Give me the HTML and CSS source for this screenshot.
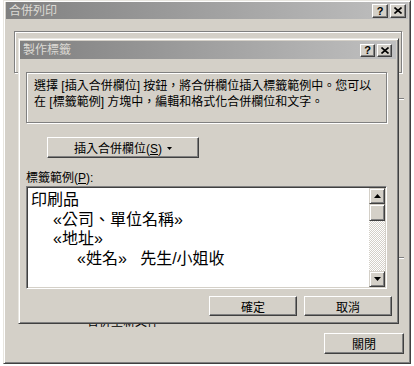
FILE: index.html
```html
<!DOCTYPE html>
<html lang="zh-Hant">
<head>
    <meta charset="UTF-8">
    <meta name="viewport" content="width=device-width, initial-scale=1.0">
    <title>合併列印</title>
    <link rel="stylesheet" href="styles.css">
</head>
<body>
    <div class="window">
        <!-- Outer window: merge print -->
        <div class="titlebar">
            <span class="title-text">合併列印</span>
            <div class="title-buttons">
                <span class="title-btn help">?</span>
                <span class="title-btn close">
                    <svg width="8" height="7" viewBox="0 0 8 7"><path d="M0.5 0.5 L7.5 6.5 M7.5 0.5 L0.5 6.5" stroke="#000" stroke-width="1.6"/></svg>
                </span>
            </div>
        </div>

        <div class="group-box"></div>
        <div class="edge-tick tick-one"></div>
        <div class="edge-tick tick-two"></div>
        <div class="merge-text">合併至新文件</div>
        <div class="close-row">
            <button class="btn btn-close">關閉</button>
        </div>

        <!-- Inner dialog: create labels -->
        <div class="dialog">
            <div class="titlebar small">
                <span class="title-text">製作標籤</span>
                <div class="title-buttons">
                    <span class="title-btn help">?</span>
                    <span class="title-btn close">
                        <svg width="8" height="7" viewBox="0 0 8 7"><path d="M0.5 0.5 L7.5 6.5 M7.5 0.5 L0.5 6.5" stroke="#000" stroke-width="1.6"/></svg>
                    </span>
                </div>
            </div>

            <div class="info-box">
                <p>選擇 [插入合併欄位] 按鈕，將合併欄位插入標籤範例中。您可以</p>
                <p>在 [標籤範例] 方塊中，編輯和格式化合併欄位和文字。</p>
            </div>

            <button class="btn btn-insert"><span>插入合併欄位(<u>S</u>)</span><svg class="drop-arrow" width="5" height="3" viewBox="0 0 5 3"><path d="M0 0 H5 L2.5 3 Z" fill="#000"/></svg></button>

            <div class="field-label">標籤範例(<u>P</u>):</div>
            <div class="sample-box">
                <div class="sample-text">
                    <div class="line">印刷品</div>
                    <div class="line indent-1">«公司、單位名稱»</div>
                    <div class="line indent-1">«地址»</div>
                    <div class="line indent-2">«姓名»&nbsp;&nbsp; 先生/小姐收</div>
                </div>
                <div class="scrollbar">
                    <div class="scroll-btn">
                        <svg width="7" height="4" viewBox="0 0 7 4"><path d="M3.5 0 L7 4 H0 Z" fill="#000"/></svg>
                    </div>
                    <div class="scroll-thumb"></div>
                    <div class="scroll-track"></div>
                    <div class="scroll-btn">
                        <svg width="7" height="4" viewBox="0 0 7 4"><path d="M0 0 H7 L3.5 4 Z" fill="#000"/></svg>
                    </div>
                </div>
            </div>

            <div class="dialog-actions">
                <button class="btn btn-action">確定</button>
                <button class="btn btn-action">取消</button>
            </div>
        </div>
    </div>
</body>
</html>
```

FILE: styles.css
```css
* {
    box-sizing: border-box;
    margin: 0;
    padding: 0;
}

body {
    width: 414px;
    height: 366px;
    overflow: hidden;
    background: #fff;
    font-family: "Liberation Sans", "Noto Sans CJK TC", sans-serif;
    font-size: 12px;
    color: #000;
}

/* Classic window frame */
.window {
    position: relative;
    margin-left: 3px;
    width: 408px;
    height: 364px;
    padding: 1px 2px 2px 2px;
    background: #d4d0c8;
    border: 1px solid;
    border-color: #e8e6e0 #404040 #404040 #e8e6e0;
    box-shadow: inset 1px 1px #fff, inset -1px -1px #808080;
}

.titlebar {
    display: flex;
    align-items: center;
    justify-content: space-between;
    height: 17px;
    padding: 0 2px 0 3px;
    background: linear-gradient(to right, #808080, #c0c0c0);
}

.title-text {
    color: #dcdad4;
    font-size: 12px;
    line-height: 14px;
}

.title-buttons {
    display: flex;
    gap: 2px;
}

.title-btn {
    display: flex;
    align-items: center;
    justify-content: center;
    width: 16px;
    height: 14px;
    background: #d4d0c8;
    border: 1px solid;
    border-color: #fff #404040 #404040 #fff;
    box-shadow: inset -1px -1px #808080;
    font-weight: bold;
    font-size: 11px;
    line-height: 12px;
}

.titlebar.small {
    height: 18px;
    padding-right: 4px;
}

.titlebar.small .title-btn {
    width: 15px;
    height: 13px;
}

/* Parts of the outer window that peek out under the dialog */
.group-box {
    margin: 12px 0 0 8px;
    width: 388px;
    height: 42px;
    border: 1px solid #808080;
    box-shadow: inset 1px 1px #fff, 1px 1px #fff;
}

.edge-tick {
    margin-left: 380px;
    width: 18px;
    height: 2px;
    border-top: 1px solid #808080;
    border-bottom: 1px solid #fff;
}

.tick-one {
    margin-top: 25px;
}

.tick-two {
    margin-top: 157px;
}

.merge-text {
    margin: 56px 0 0 81px;
    line-height: 14px;
}

.close-row {
    display: flex;
    justify-content: flex-end;
    margin-top: 4px;
    padding-right: 4px;
}

/* Buttons */
.btn {
    display: flex;
    align-items: center;
    justify-content: center;
    background: #d4d0c8;
    border: 1px solid;
    border-color: #fff #404040 #404040 #fff;
    box-shadow: inset -1px -1px #808080;
    font-family: "Liberation Sans", "Noto Sans CJK TC", sans-serif;
    font-size: 12px;
    color: #000;
}

.btn-close {
    width: 80px;
    height: 21px;
}

/* Inner dialog sits over the outer window */
.dialog {
    position: absolute;
    left: 14px;
    top: 37px;
    width: 381px;
    height: 286px;
    padding: 2px 2px 0 1px;
    background: #d4d0c8;
    border: 1px solid;
    border-color: #e8e6e0 #404040 #404040 #e8e6e0;
    box-shadow: inset 1px 1px #fff, inset -1px -1px #808080;
}

.info-box {
    margin: 13px 0 0 6px;
    width: 361px;
    height: 51px;
    padding: 5px 0 0 7px;
    border: 1px solid #808080;
    box-shadow: inset 1px 1px #fff, 1px 1px #fff;
    line-height: 16px;
    white-space: nowrap;
}

.btn-insert {
    margin: 14px 0 0 27px;
    width: 152px;
    height: 21px;
    gap: 5px;
}

.drop-arrow {
    margin-top: 1px;
}

.field-label {
    margin: 13px 0 0 6px;
    line-height: 14px;
}

.sample-box {
    display: flex;
    margin: 1px 0 0 6px;
    width: 361px;
    height: 103px;
    background: #fff;
    border: 1px solid;
    border-color: #808080 #fff #fff #808080;
    box-shadow: inset 1px 1px #404040, inset -1px -1px #d4d0c8;
    padding: 1px;
}

.sample-text {
    flex: 1;
    padding: 2px 0 0 3px;
    font-size: 16px;
    line-height: 19.5px;
    white-space: nowrap;
}

.indent-1 {
    padding-left: 22px;
}

.indent-2 {
    padding-left: 46px;
}

.scrollbar {
    display: flex;
    flex-direction: column;
    width: 16px;
}

.scroll-btn,
.scroll-thumb {
    display: flex;
    align-items: center;
    justify-content: center;
    height: 16px;
    background: #d4d0c8;
    border: 1px solid;
    border-color: #d4d0c8 #404040 #404040 #d4d0c8;
    box-shadow: inset 1px 1px #fff, inset -1px -1px #808080;
}

.scroll-thumb {
    height: 17px;
}

.scroll-track {
    flex: 1;
    background: repeating-conic-gradient(#d4d0c8 0 25%, #fff 0 50%) 0 0 / 2px 2px;
}

.dialog-actions {
    display: flex;
    justify-content: flex-end;
    gap: 7px;
    margin-top: 7px;
    padding-right: 4px;
}

.btn-action {
    width: 88px;
    height: 20px;
}
```
